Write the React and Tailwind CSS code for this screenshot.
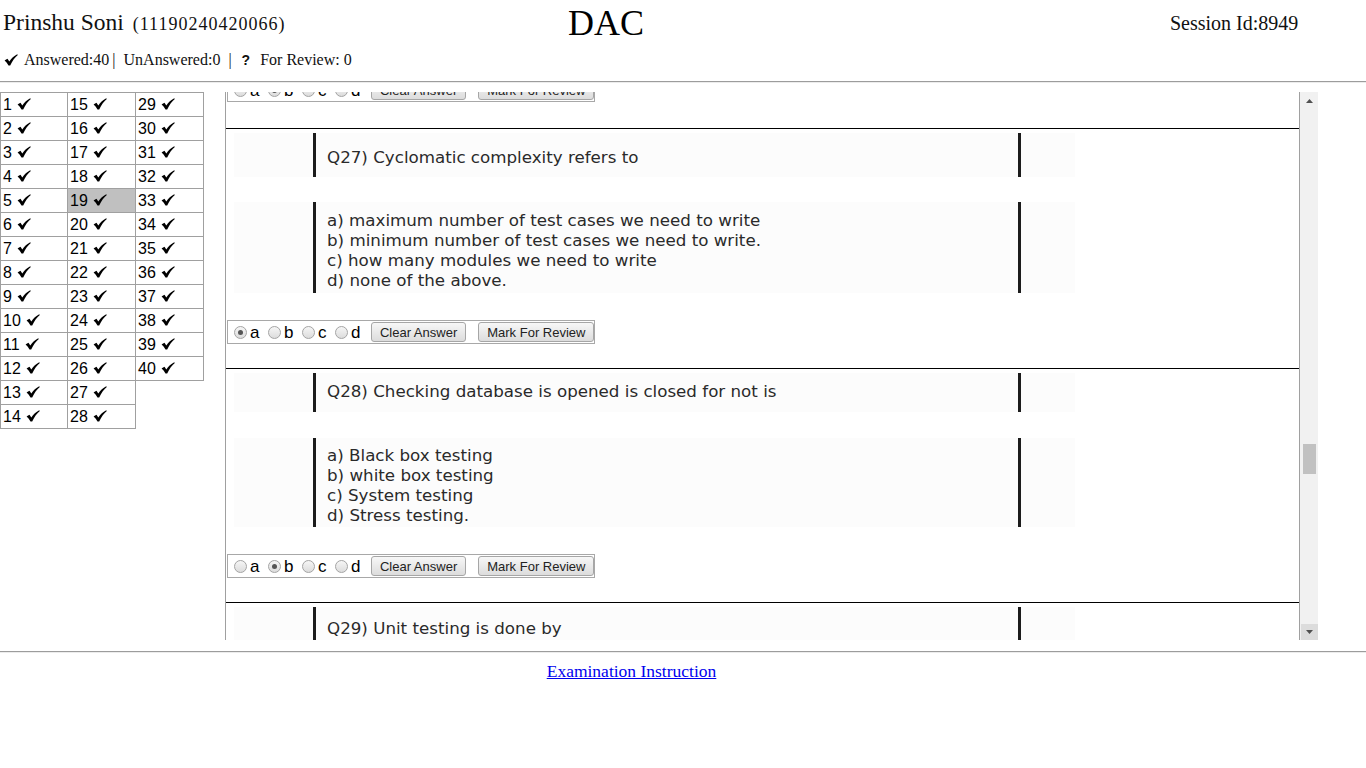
const serif = "font-['Liberation_Serif',serif]";
const arial = "font-['Liberation_Sans',Arial,sans-serif]";
const verdana = "font-['DejaVu_Sans',Verdana,sans-serif]";

const gridColumns = [
  Array.from({ length: 14 }, (_, i) => i + 1),
  Array.from({ length: 14 }, (_, i) => i + 15),
  Array.from({ length: 12 }, (_, i) => i + 29),
];

const questions = [
  {
    title: "Q27) Cyclomatic complexity refers to",
    options: [
      "a) maximum number of test cases we need to write",
      "b) minimum number of test cases we need to write.",
      "c) how many modules we need to write",
      "d) none of the above.",
    ],
    selected: "a",
    qBox: "mt-[4px] h-[44px]",
    qPad: "pt-[14px]",
    oBox: "mt-[25px] h-[91px]",
    oPad: "pt-[8px]",
  },
  {
    title: "Q28) Checking database is opened is closed for not is",
    options: [
      "a) Black box testing",
      "b) white box testing",
      "c) System testing",
      "d) Stress testing.",
    ],
    selected: "b",
    qBox: "mt-[4px] h-[39px]",
    qPad: "pt-[8px]",
    oBox: "mt-[26px] h-[89px]",
    oPad: "pt-[7px]",
  },
  {
    title: "Q29) Unit testing is done by",
    options: ["a) Users", "b) Developers", "c) Customers", "d) None of the above"],
    selected: null,
    qBox: "mt-[4px] h-[40px]",
    qPad: "pt-[11px]",
    oBox: "mt-[26px] h-[89px]",
    oPad: "pt-[7px]",
  },
];

// heavy check mark, drawn because the fallback glyph is too thin
function Check({ className = "" }) {
  return (
    <svg className={`shrink-0 ${className}`} width="14" height="12" viewBox="0 0 14 12">
      <path
        d="M0.6 6.4 C1.6 5.5 2.6 5 3.5 4.7 L5.3 7.4 C7.4 4.4 10 1.8 13.2 0.2 L13.8 1 C11 3.4 8.4 6.8 6.2 11.4 L4.5 11.6 C3.5 9.5 2.2 7.8 0.6 6.4 Z"
        fill="#000"
      />
    </svg>
  );
}

function Radio({ checked }) {
  return (
    <span className="ml-[5px] mr-[3px] inline-flex h-[13px] w-[13px] items-center justify-center rounded-full border border-[#a4a4a4] bg-gradient-to-b from-[#f6f6f6] to-[#dcdcdc]">
      {checked && <span className="h-[5px] w-[5px] rounded-full bg-[#555]" />}
    </span>
  );
}

function AnswerRow({ selected, className = "" }) {
  const buttonClass =
    "h-[20px] rounded-[3px] border border-[#a6a6a6] bg-gradient-to-b from-[#f7f7f7] to-[#dcdcdc] px-[8px] text-[13px] leading-none text-[#222]";
  return (
    <div className={`ml-px flex h-[24px] w-fit items-center border border-[#a8a8a8] pl-px ${arial} text-[17px] ${className}`}>
      {["a", "b", "c", "d"].map((letter) => (
        <span key={letter} className="flex items-center">
          <Radio checked={selected === letter} />
          <span className="mr-[3.5px] leading-none">{letter}</span>
        </span>
      ))}
      <button className={`ml-[7px] ${buttonClass}`}>Clear Answer</button>
      <button className={`ml-[12px] ${buttonClass}`}>Mark For Review</button>
    </div>
  );
}

function QuestionImage({ box, pad, children }) {
  return (
    <div className={`ml-[8px] flex w-[841px] bg-[#fcfcfc] ${box}`}>
      <div className={`ml-[79px] w-[708px] border-x-[3px] border-[#1c1c1c] pl-[11px] ${pad} ${verdana} text-[16.7px] leading-[20px] text-[#2a2a2a]`}>
        {children}
      </div>
    </div>
  );
}

function Question({ q }) {
  return (
    <div>
      <div className="h-px bg-black" />
      <QuestionImage box={q.qBox} pad={q.qPad}>
        {q.title}
      </QuestionImage>
      <QuestionImage box={q.oBox} pad={q.oPad}>
        {q.options.map((o) => (
          <div key={o}>{o}</div>
        ))}
      </QuestionImage>
      <AnswerRow selected={q.selected} className="mt-[27px]" />
      <div className="h-[24px]" />
    </div>
  );
}

function Scrollbar() {
  return (
    <div className="flex w-[18px] shrink-0 flex-col bg-[#f1f1f1]">
      <div className="flex h-[17px] items-center justify-center">
        <svg width="7" height="4" viewBox="0 0 7 4">
          <path d="M0 4 L3.5 0 L7 4 Z" fill="#505050" />
        </svg>
      </div>
      <div className="h-[335px]" />
      <div className="ml-[3px] h-[30px] w-[13px] bg-[#c1c1c1]" />
      <div className="flex-1" />
      <div className="ml-px flex h-[16px] items-center justify-center bg-[#dcdcdc]">
        <svg width="7" height="4" viewBox="0 0 7 4">
          <path d="M0 0 L7 0 L3.5 4 Z" fill="#505050" />
        </svg>
      </div>
    </div>
  );
}

function Hr({ className = "" }) {
  return <div className={`border-t border-b border-t-[#9c9c9c] border-b-[#ececec] ${className}`} />;
}

export default function App() {
  return (
    <div className={`min-h-[768px] w-[1366px] bg-white text-black ${serif}`}>
      <div className="flex h-[46px] items-center">
        <div className="flex w-[568px] items-baseline pl-[3px]">
          <span className="text-[23.5px] text-[#111]">Prinshu Soni</span>
          <span className="ml-[9px] text-[18px] tracking-[1px] text-[#111]">(11190240420066)</span>
        </div>
        <div className="w-[602px] text-[36px] leading-none">DAC</div>
        <div className="text-[20px] text-[#111]">Session Id:8949</div>
      </div>

      <div className="flex h-[28px] items-center text-[16px] text-[#111]">
        <Check className="ml-[4px]" />
        <span className="ml-[6px]">Answered:40</span>
        <span className="ml-[3px]">|</span>
        <span className="ml-[8px]">UnAnswered:0</span>
        <span className="ml-[8px]">|</span>
        <span className={`ml-[10px] ${arial} text-[14px] font-bold leading-none`}>?</span>
        <span className="ml-[10px]">For Review: 0</span>
      </div>

      <Hr className="mt-[7px]" />

      <div className="mt-[9px] flex items-start">
        <div className="w-[225px] shrink-0">
          <div className={`flex items-start ${arial} text-[16px]`}>
            {gridColumns.map((col, ci) => (
              <div
                key={ci}
                className={`border-t border-[#a0a0a0] ${ci === 0 ? "w-[68px] border-l" : "w-[68px]"}`}
              >
                {col.map((n) => (
                  <div
                    key={n}
                    className={`flex h-[24px] items-center border-r border-b border-[#a0a0a0] pl-[2px] ${
                      n === 19 ? "bg-[#c0c0c0]" : ""
                    }`}
                  >
                    <span>{n}</span>
                    <Check className="ml-[5px] -mt-[2px]" />
                  </div>
                ))}
              </div>
            ))}
          </div>
        </div>

        <div className="flex h-[548px] w-[1093px] shrink-0">
          <div className="flex-1 overflow-hidden border-x border-[#a0a0a0]">
            <div className="-mt-[14px]">
              <AnswerRow selected="b" />
              <div className="h-[26px]" />
              {questions.map((q) => (
                <Question key={q.title} q={q} />
              ))}
            </div>
          </div>
          <Scrollbar />
        </div>
      </div>

      <Hr className="mt-[11px]" />

      <div className="mt-[8px] w-[1263px] text-center text-[17.5px] leading-[20px]">
        <a href="#" className="text-[#0000ee] underline">
          Examination Instruction
        </a>
      </div>
    </div>
  );
}
